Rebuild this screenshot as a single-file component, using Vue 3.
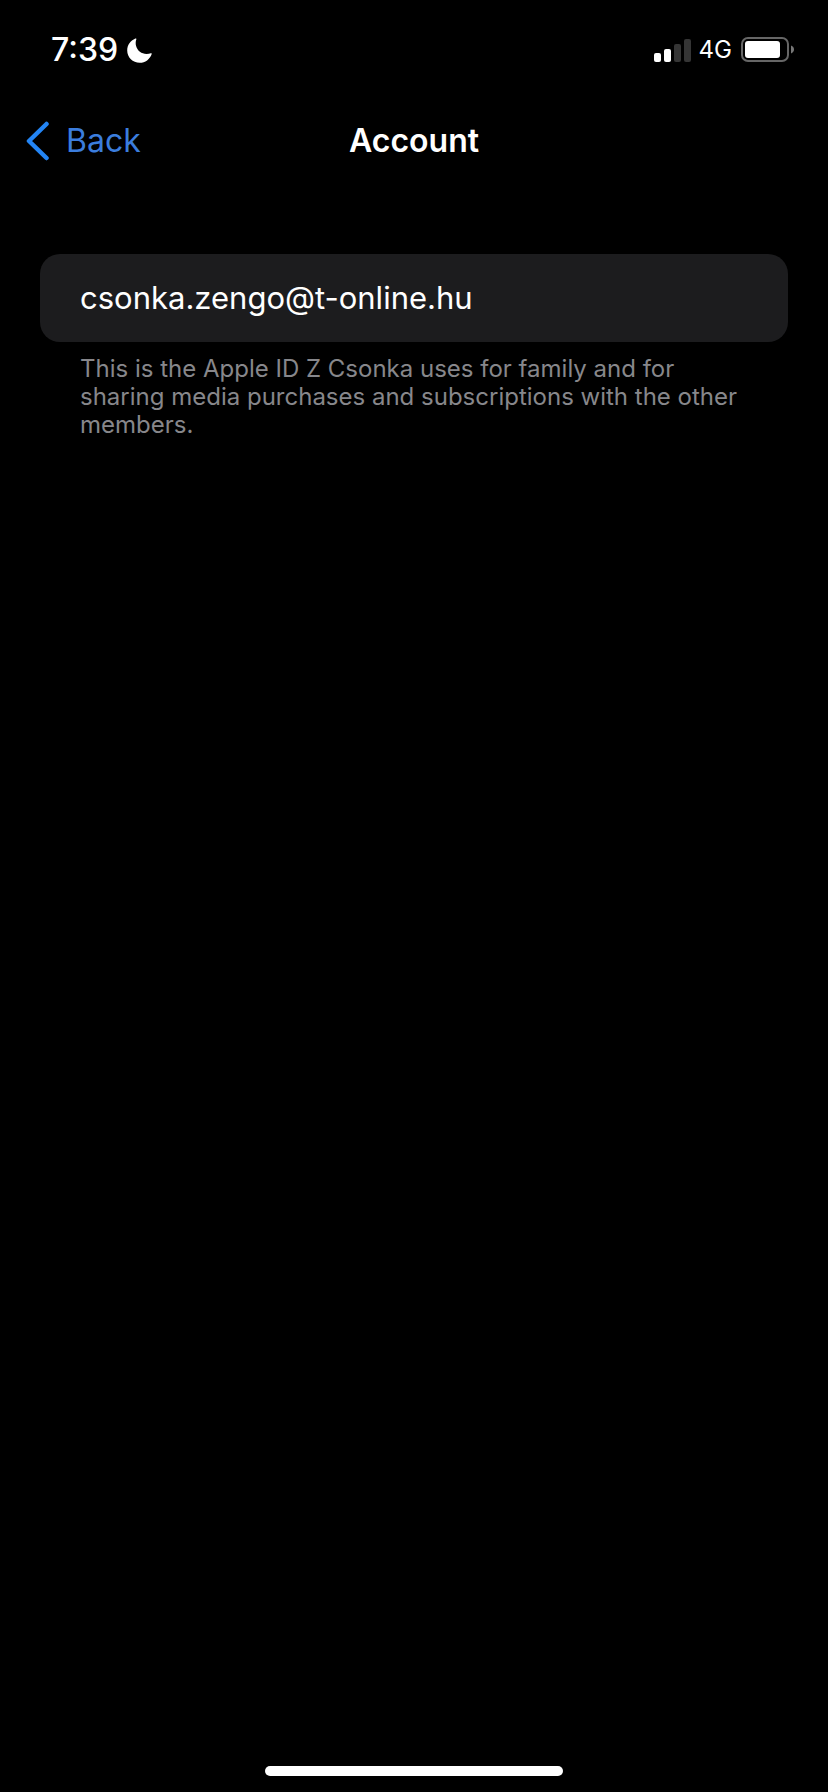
<script setup>
const account = {
  email: 'csonka.zengo@t-online.hu',
  note: 'This is the Apple ID Z Csonka uses for family and for sharing media purchases and subscriptions with the other members.',
}
</script>

<template>
  <div class="screen">
    <div class="status">
      <div class="status-side">
        <span class="time">7:39</span>
        <svg class="moon" viewBox="0 0 25 25" role="img" aria-label="Do not disturb">
          <path fill="#fff" d="M8.400.6C9 .2 9.600.7 9.300 1.400C8.500 3.300 8.500 5.800 9.100 8C10.500 13 14.500 15.900 19.500 15.900C21.200 15.900 22.600 15.600 23.800 15.200C24.500 15 24.900 15.400 24.700 16C22.900 21.300 18.300 24.800 12.700 24.800C5.700 24.800.2 19.400.2 12.500C.2 7 3.400 2.700 8.400.6Z" />
        </svg>
      </div>
      <div class="status-side">
        <svg class="signal" viewBox="0 0 38 24" role="img" aria-label="Signal">
          <rect x="0" y="15" width="7" height="9" rx="2" fill="#fff" />
          <rect x="10" y="11" width="7" height="13" rx="2" fill="#fff" />
          <rect x="20" y="6" width="7" height="18" rx="2" fill="#353535" />
          <rect x="30" y="1" width="7" height="23" rx="2" fill="#353535" />
        </svg>
        <span class="network">4G</span>
        <svg class="battery" viewBox="0 0 54 26" role="img" aria-label="Battery">
          <rect x="1" y="1" width="46" height="23" rx="6" fill="none" stroke="#666" stroke-width="2" />
          <rect x="4" y="4" width="35" height="17" rx="3" fill="#fff" />
          <path d="M50 8.500C52 9.300 53 10.700 53 12.500S52 15.700 50 16.500Z" fill="#777" />
        </svg>
      </div>
    </div>

    <header class="nav">
      <button class="back" type="button">
        <svg class="chevron" viewBox="0 0 24 40" aria-hidden="true">
          <path d="M20.500 3L3 20L20.500 37" fill="none" stroke="#2385f5" stroke-width="4.500" stroke-linecap="round" stroke-linejoin="round" />
        </svg>
        <span>Back</span>
      </button>
      <h1 class="title">Account</h1>
    </header>

    <main class="content">
      <div class="card">{{ account.email }}</div>
      <p class="note">{{ account.note }}</p>
    </main>

    <div class="home"></div>
  </div>
</template>

<style>
body {
  margin: 0;
  background: #000;
}
</style>

<style scoped>
.screen {
  box-sizing: border-box;
  min-height: 100vh;
  display: flex;
  flex-direction: column;
  background: #000;
  color: #fff;
  font-family: Inter, "Liberation Sans", sans-serif;
}
.status {
  display: flex;
  justify-content: space-between;
  align-items: center;
  height: 100px;
  padding: 0 33px 0 51px;
}
.status-side {
  display: flex;
  align-items: center;
}
.time {
  font-size: 32px;
  line-height: 40px;
  font-weight: 500;
}
.moon {
  width: 25px;
  height: 25px;
  margin-left: 9px;
}
.signal {
  width: 38px;
  height: 24px;
}
.network {
  margin: 0 9px 0 7px;
  font-size: 24px;
  line-height: 32px;
}
.battery {
  width: 54px;
  height: 26px;
}
.nav {
  display: grid;
  grid-template-columns: 1fr auto 1fr;
  align-items: center;
  height: 82px;
  padding: 0 26px;
}
.back {
  display: flex;
  align-items: center;
  justify-self: start;
  gap: 16px;
  padding: 0;
  border: 0;
  background: none;
  color: #3b7ddd;
  font: inherit;
  font-size: 32px;
  line-height: 40px;
  cursor: pointer;
}
.chevron {
  width: 24px;
  height: 40px;
}
.title {
  margin: 0;
  font-size: 32px;
  line-height: 40px;
  font-weight: 600;
}
.content {
  flex: 1;
  padding: 72px 40px 0;
}
.card {
  padding: 24px 40px;
  border-radius: 20px;
  background: #1c1c1e;
  font-size: 31px;
  line-height: 40px;
}
.note {
  margin: 0;
  padding: 13px 40px;
  color: #87878b;
  font-size: 24px;
  line-height: 28px;
}
.home {
  align-self: center;
  width: 36%;
  height: 10px;
  margin-bottom: 16px;
  border-radius: 5px;
  background: #fff;
}
</style>
